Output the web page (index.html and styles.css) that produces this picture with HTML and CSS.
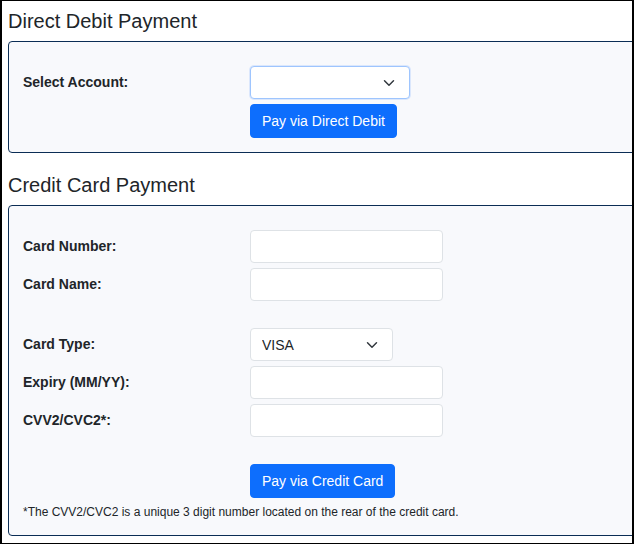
FILE: index.html
```html
<!DOCTYPE html>
<html lang="en">
<head>
<meta charset="utf-8">
<title>Payment</title>
<link rel="stylesheet" href="styles.css">
</head>
<body>
<div class="frame">
  <section class="pay pay-debit">
    <h2 class="pay-title">Direct Debit Payment</h2>
    <div class="pay-box">
      <div class="form-grid">
        <label class="lbl" for="acct">Select Account:</label>
        <select id="acct" class="sel sel-account is-focus"><option></option></select>
        <span></span>
        <button class="btn btn-debit" type="button">Pay via Direct Debit</button>
      </div>
    </div>
  </section>

  <section class="pay pay-credit">
    <h2 class="pay-title">Credit Card Payment</h2>
    <div class="pay-box">
      <div class="form-grid">
        <label class="lbl" for="cnum">Card Number:</label>
        <input id="cnum" class="inp" type="text">
        <label class="lbl" for="cname">Card Name:</label>
        <input id="cname" class="inp" type="text">
        <div class="spacer"></div>
        <label class="lbl" for="ctype">Card Type:</label>
        <select id="ctype" class="sel sel-type"><option>VISA</option></select>
        <label class="lbl" for="cexp">Expiry (MM/YY):</label>
        <input id="cexp" class="inp" type="text">
        <label class="lbl" for="ccvv">CVV2/CVC2*:</label>
        <input id="ccvv" class="inp" type="text">
        <span></span>
        <button class="btn btn-credit" type="button">Pay via Credit Card</button>
        <p class="note">*The CVV2/CVC2 is a unique 3 digit number located on the rear of the credit card.</p>
      </div>
    </div>
  </section>
</div>
</body>
</html>
```

FILE: styles.css
```css
* { box-sizing: border-box; }

html, body {
  margin: 0;
  padding: 0;
  background: #ffffff;
}

body {
  font-family: "Liberation Sans", Arial, sans-serif;
  color: #212529;
}

.frame {
  width: 634px;
  height: 544px;
  border: 1px solid #000;
  border-left-width: 2px;
  border-right-width: 2px;
  overflow: hidden;
  padding: 8px 0 0 6px;
}

.pay-title {
  margin: 0 0 8px 0;
  font-size: 20px;
  line-height: 24px;
  font-weight: 400;
  color: #212529;
}

.pay-credit {
  margin-top: 20px;
}

.pay-box {
  width: 660px;
  background: #f8f9fc;
  border: 1px solid #0b2d55;
  border-radius: 4px;
  padding: 24px 0 14px 14px;
}

.pay-credit .pay-box {
  padding-bottom: 16px;
}

.form-grid {
  display: grid;
  grid-template-columns: 227px auto;
  row-gap: 5px;
  align-items: center;
  justify-items: start;
}

.lbl {
  font-size: 14px;
  font-weight: 700;
  line-height: 17px;
  color: #212529;
}

.inp,
.sel {
  height: 33px;
  margin: 0;
  font-family: "Liberation Sans", Arial, sans-serif;
  font-size: 14px;
  color: #212529;
  background-color: #ffffff;
  border: 1px solid #dee2e6;
  border-radius: 4px;
  padding: 0 11px;
  outline: none;
}

.inp {
  width: 193px;
}

.sel {
  -webkit-appearance: none;
  appearance: none;
  padding-right: 36px;
  background-image: url("data:image/svg+xml,%3csvg xmlns='http://www.w3.org/2000/svg' viewBox='0 0 16 16'%3e%3cpath fill='none' stroke='%23343a40' stroke-linecap='round' stroke-linejoin='round' stroke-width='2' d='m2 5 6 6 6-6'/%3e%3c/svg%3e");
  background-repeat: no-repeat;
  background-position: right 12px center;
  background-size: 16px 12px;
}

.sel-account {
  width: 160px;
}

.sel-type {
  width: 143px;
}

.is-focus {
  border-color: #9ec5fe;
  box-shadow: 0 0 0 1px rgba(13, 110, 253, 0.12);
}

.btn {
  height: 34px;
  padding: 0 11px;
  font-family: "Liberation Sans", Arial, sans-serif;
  font-size: 14px;
  color: #ffffff;
  background: #0d6efd;
  border: 1px solid #0d6efd;
  border-radius: 4px;
  cursor: pointer;
}

.btn-credit {
  margin-top: 22px;
}

.spacer {
  grid-column: 1 / -1;
  height: 17px;
}

.note {
  grid-column: 1 / -1;
  margin: 2px 0 0 0;
  font-size: 12px;
  line-height: 14px;
  color: #212529;
}
```
